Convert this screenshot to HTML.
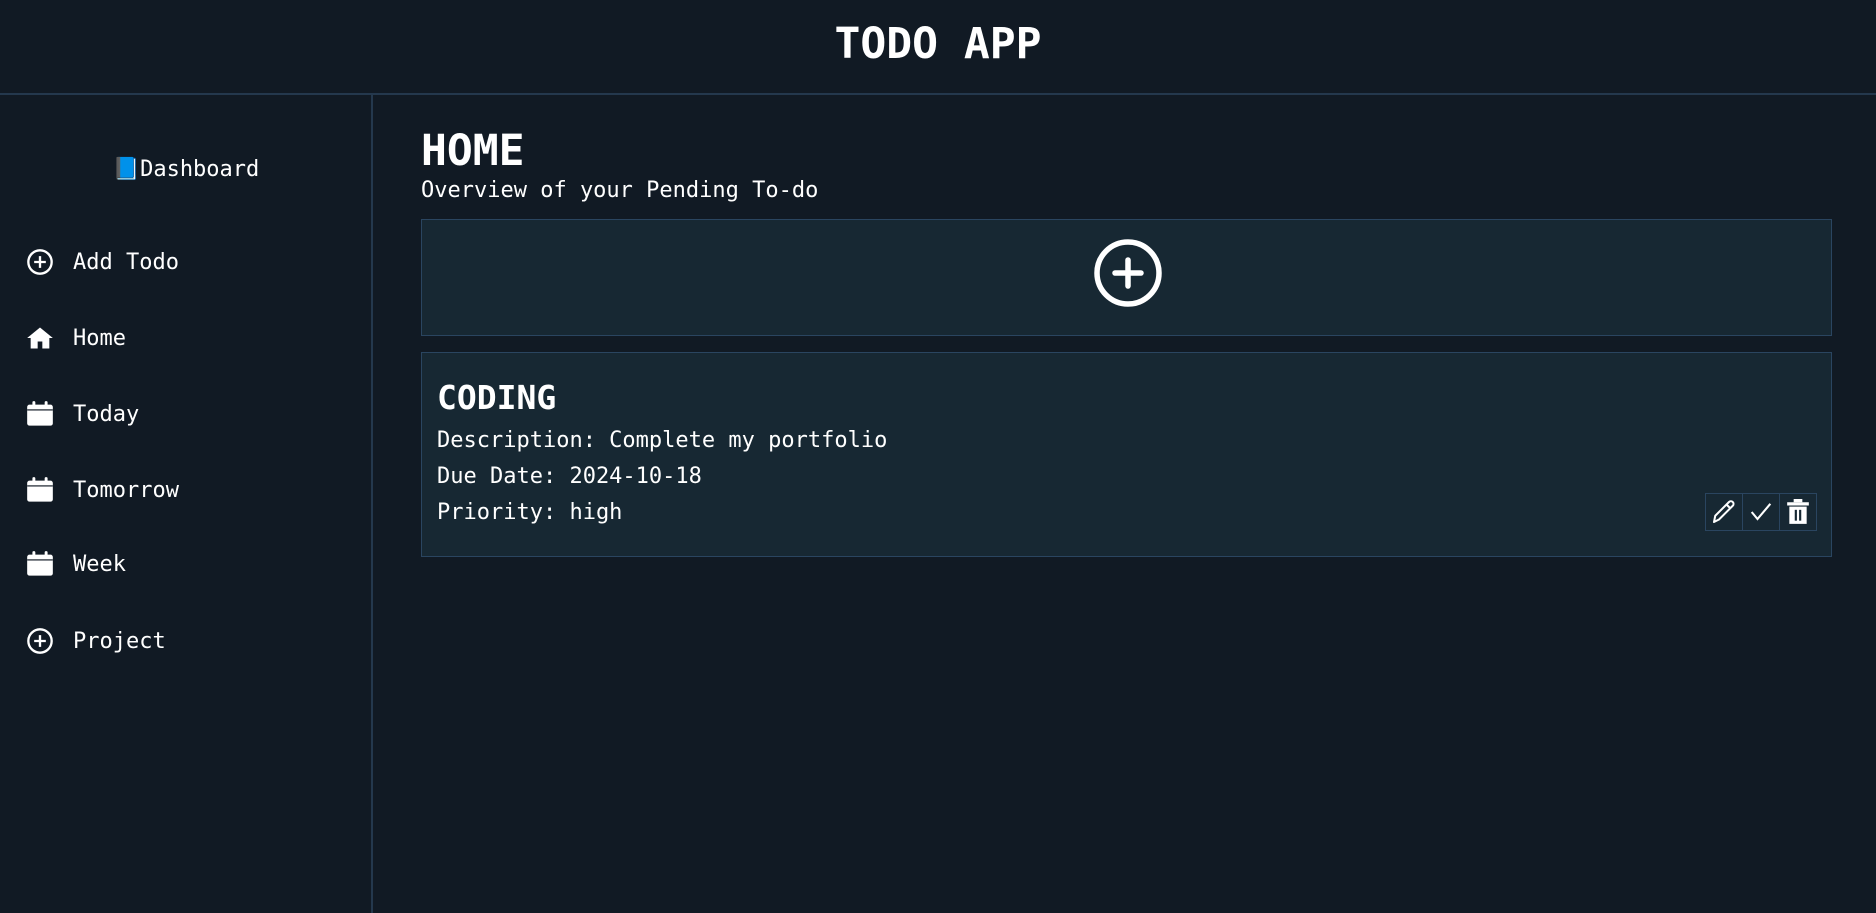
<!DOCTYPE html>
<html><head><meta charset="utf-8"><style>
*{margin:0;padding:0;box-sizing:border-box}
body{width:1876px;height:913px;background:#111a24;color:#fff;font-family:"DejaVu Sans Mono","Liberation Mono",monospace;overflow:hidden;position:relative}
.hdr{position:absolute;left:0;top:0;width:1876px;height:95px;border-bottom:2px solid #24384d;text-align:center}
.hdr h1{font-size:43px;font-weight:bold;line-height:88px}
.side{position:absolute;left:0;top:95px;width:373px;height:818px;border-right:2px solid #24384d}
.dash{position:absolute;top:157px;left:0;width:372px;text-align:center;font-size:22px}
.nav{position:absolute;left:26px;font-size:22px;display:flex;align-items:center;height:30px}
.nav svg{width:28px;height:28px;margin-right:19px}
.t{font-size:22px;position:absolute;white-space:nowrap}
.box{position:absolute;left:421px;width:1411px;background:#172833;border:1px solid #2a4560}
.btn{position:absolute;top:493px;width:38px;height:38px;border:1px solid #2a4560;display:flex;align-items:center;justify-content:center}
</style></head><body>
<div class="hdr"><h1>TODO APP</h1></div>
<div class="side"></div>
<div class="dash">📘Dashboard</div>
<div class="nav" style="top:247px"><svg viewBox="0 0 24 24" fill="none" stroke="#fff" stroke-width="2"><circle cx="12" cy="12" r="10"/><path d="M12 7v10M7 12h10"/></svg>Add Todo</div>
<div class="nav" style="top:323px"><svg viewBox="0 0 24 24" fill="#fff"><path d="M12 3L1 12h3v9h6v-6h4v6h6v-9h3z"/></svg>Home</div>
<div class="nav" style="top:399px"><svg viewBox="0 0 24 24" fill="#fff"><rect x="1" y="4" width="22" height="18" rx="2"/><rect x="5.5" y="1" width="2.5" height="5" rx="1"/><rect x="16" y="1" width="2.5" height="5" rx="1"/><rect x="1" y="8" width="22" height="1" fill="#111a24"/></svg>Today</div>
<div class="nav" style="top:475px"><svg viewBox="0 0 24 24" fill="#fff"><rect x="1" y="4" width="22" height="18" rx="2"/><rect x="5.5" y="1" width="2.5" height="5" rx="1"/><rect x="16" y="1" width="2.5" height="5" rx="1"/><rect x="1" y="8" width="22" height="1" fill="#111a24"/></svg>Tomorrow</div>
<div class="nav" style="top:549px"><svg viewBox="0 0 24 24" fill="#fff"><rect x="1" y="4" width="22" height="18" rx="2"/><rect x="5.5" y="1" width="2.5" height="5" rx="1"/><rect x="16" y="1" width="2.5" height="5" rx="1"/><rect x="1" y="8" width="22" height="1" fill="#111a24"/></svg>Week</div>
<div class="nav" style="top:626px"><svg viewBox="0 0 24 24" fill="none" stroke="#fff" stroke-width="2"><circle cx="12" cy="12" r="10"/><path d="M12 7v10M7 12h10"/></svg>Project</div>

<div class="t" style="left:421px;top:126px;font-size:43px;font-weight:bold">HOME</div>
<div class="t" style="left:421px;top:178px">Overview of your Pending To-do</div>
<div class="box" style="top:219px;height:117px">
<svg style="position:absolute;left:668px;top:18px" width="76" height="76" viewBox="0 0 76 76" fill="none" stroke="#fff" stroke-width="5.5" stroke-linecap="round"><circle cx="38" cy="35" r="31"/><path d="M38 22v26M25 35h26"/></svg>
</div>
<div class="box" style="top:352px;height:205px"></div>
<div class="t" style="left:437px;top:378px;font-size:33px;font-weight:bold">CODING</div>
<div class="t" style="left:437px;top:428px">Description: Complete my portfolio</div>
<div class="t" style="left:437px;top:464px">Due Date: 2024-10-18</div>
<div class="t" style="left:437px;top:500px">Priority: high</div>
<div class="btn" style="left:1705px"><svg width="30" height="30" viewBox="0 0 24 24" fill="none" stroke="#fff" stroke-width="1.6" stroke-linejoin="round"><path d="M4 20l1-5L16 4a2 2 0 013 3L8 18z"/><path d="M14 6l3 3"/></svg></div>
<div class="btn" style="left:1742px"><svg width="28" height="28" viewBox="0 0 24 24" fill="none" stroke="#fff" stroke-width="1.8"><path d="M4 12l5 6L20 5"/></svg></div>
<div class="btn" style="left:1779px"><svg width="26" height="30" viewBox="0 0 24 26" fill="#fff"><rect x="8" y="1" width="8" height="3"/><rect x="2" y="4" width="20" height="3"/><path d="M4 8h16v16H4z"/><rect x="9" y="11" width="2" height="10" fill="#172833"/><rect x="13" y="11" width="2" height="10" fill="#172833"/></svg></div>
</body></html>
